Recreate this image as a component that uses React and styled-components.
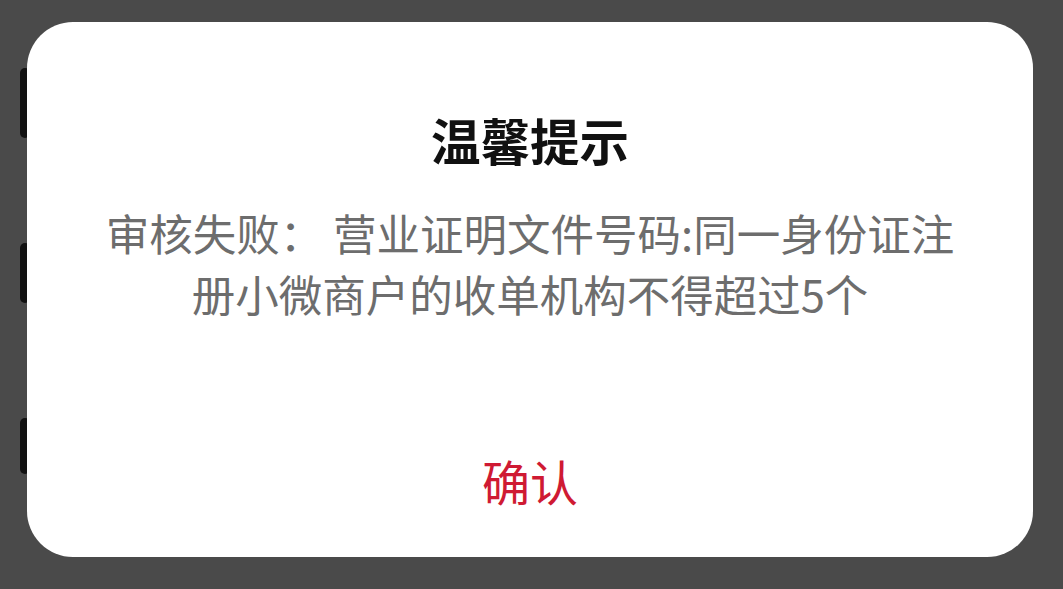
import React from 'react';
import styled, {createGlobalStyle} from 'styled-components';

const GlobalStyle = createGlobalStyle`
  html, body {
    margin: 0;
    padding: 0;
    width: 100%;
    height: 100%;
    overflow: hidden;
    background: #4a4a4a;
  }
  body {
    font-family: 'Noto Sans CJK SC', 'Noto Sans', sans-serif;
  }
`;

const StyledPage = styled.div`
  width: 1063px;
  height: 589px;
  background: #4a4a4a;
  display: flex;
  flex-direction: column;
  align-items: flex-start;
  padding: 68px 0 0 20px;
  box-sizing: border-box;
`;

const StyledPeek = styled.div`
  width: 10px;
  height: ${({size}) => size}px;
  margin-top: ${({gap}) => gap}px;
  background: #111;
  border-radius: 5px;
`;

const StyledOverlay = styled.div`
  position: fixed;
  inset: 0;
  display: flex;
  align-items: flex-start;
  justify-content: flex-start;
  padding: 22px 0 0 27px;
`;

const StyledDialog = styled.div`
  width: 1006px;
  height: 535px;
  background: #ffffff;
  border-radius: 46px;
  display: flex;
  flex-direction: column;
  align-items: center;
  padding-top: 93px;
  box-sizing: border-box;
`;

const StyledTitle = styled.h2`
  margin: 0;
  font-size: 49.5px;
  line-height: 1;
  font-weight: 700;
  color: #111111;
`;

const StyledMessage = styled.p`
  margin: 37px 0 0;
  font-size: 43.5px;
  line-height: 61px;
  color: #6d6d6d;
  text-align: center;
  white-space: nowrap;
`;

const StyledButton = styled.button`
  margin-top: auto;
  margin-bottom: 53px;
  border: none;
  background: none;
  padding: 0 20px;
  font-family: inherit;
  font-size: 48px;
  line-height: 1;
  color: #cf1a33;
  cursor: pointer;
`;

const App = () => (
  <>
    <GlobalStyle />
    <StyledPage>
      <StyledPeek size={70} gap={0} />
      <StyledPeek size={60} gap={105} />
      <StyledPeek size={56} gap={115} />
    </StyledPage>
    <StyledOverlay>
      <StyledDialog>
        <StyledTitle>温馨提示</StyledTitle>
        <StyledMessage>
          审核失败：&nbsp;营业证明文件号码:同一身份证注
          <br />
          册小微商户的收单机构不得超过5个
        </StyledMessage>
        <StyledButton>确认</StyledButton>
      </StyledDialog>
    </StyledOverlay>
  </>
);

export default App;
